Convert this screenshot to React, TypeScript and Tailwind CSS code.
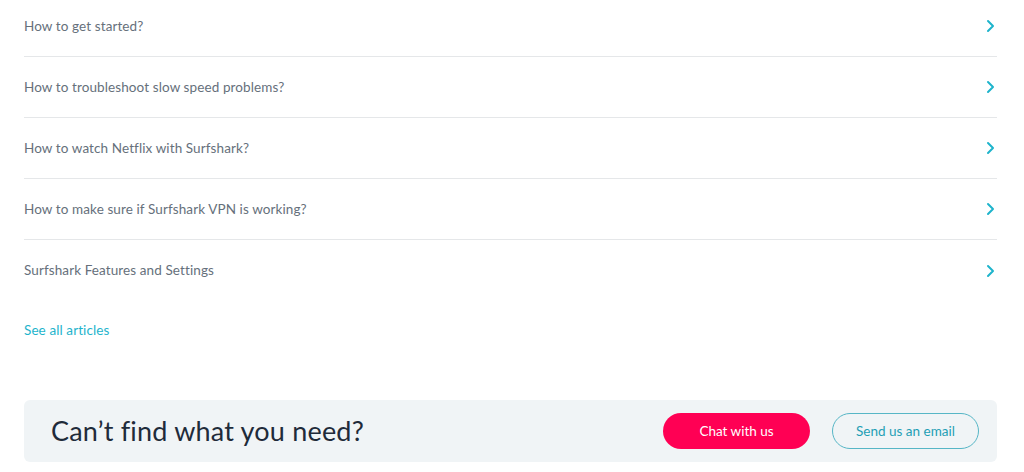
const QUESTIONS = [
  'How to get started?',
  'How to troubleshoot slow speed problems?',
  'How to watch Netflix with Surfshark?',
  'How to make sure if Surfshark VPN is working?',
  'Surfshark Features and Settings',
]

function Chevron() {
  return (
    <svg width="9" height="14" viewBox="0 0 9 14" fill="none">
      <path d="M2 2l5 5-5 5" stroke="#1eb4cc" strokeWidth="2" strokeLinecap="round" strokeLinejoin="round" />
    </svg>
  )
}

export default function App() {
  return (
    <div className="w-[1024px] h-[472px] overflow-hidden bg-white pl-6 pr-[27px] font-['Lato',sans-serif]">
      <ul className="-mt-[4px]">
        {QUESTIONS.map((q, i) => (
          <li
            key={q}
            className={`flex items-center justify-between h-[61px] pr-[2px] ${i < QUESTIONS.length - 1 ? 'border-b border-[#e5e7e9]' : ''}`}
          >
            <span className="text-[13.5px] text-[#66707b] tracking-[0.1px]">{q}</span>
            <Chevron />
          </li>
        ))}
      </ul>
      <a className="block mt-[19px] text-[13.5px] text-[#1eb4cc] tracking-[0.1px]">See all articles</a>
      <div className="mt-[60px] h-[62px] rounded-[6px] bg-[#f0f4f6] flex items-center pl-[27px] pr-[18px]">
        <h2 className="flex-1 text-[27px] text-[#1f2b3a] tracking-[0.2px]">Can’t find what you need?</h2>
        <button className="w-[147px] h-[36px] rounded-full bg-[#ff0054] text-white text-[13.5px]">Chat with us</button>
        <button className="ml-[22px] w-[147px] h-[36px] rounded-full border border-[#56b6c6] text-[#1f9fb5] text-[13.5px]">Send us an email</button>
      </div>
    </div>
  )
}
